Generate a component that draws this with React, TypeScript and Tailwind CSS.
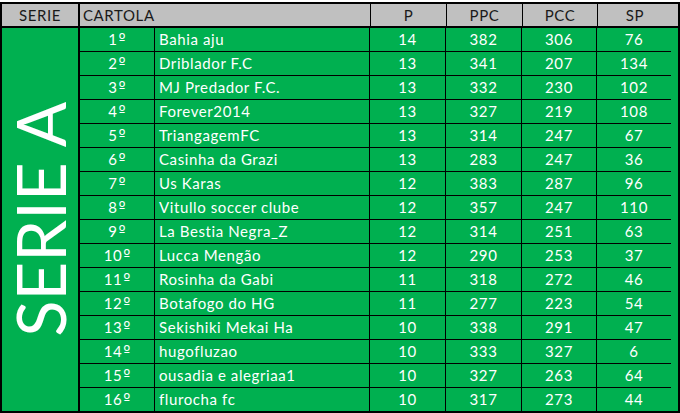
const ROWS = [
  ['1', 'Bahia aju', 14, 382, 306, 76],
  ['2', 'Driblador F.C', 13, 341, 207, 134],
  ['3', 'MJ Predador F.C.', 13, 332, 230, 102],
  ['4', 'Forever2014', 13, 327, 219, 108],
  ['5', 'TriangagemFC', 13, 314, 247, 67],
  ['6', 'Casinha da Grazi', 13, 283, 247, 36],
  ['7', 'Us Karas', 12, 383, 287, 96],
  ['8', 'Vitullo soccer clube', 12, 357, 247, 110],
  ['9', 'La Bestia Negra_Z', 12, 314, 251, 63],
  ['10', 'Lucca Mengão', 12, 290, 253, 37],
  ['11', 'Rosinha da Gabi', 11, 318, 272, 46],
  ['12', 'Botafogo do HG', 11, 277, 223, 54],
  ['13', 'Sekishiki Mekai Ha', 10, 338, 291, 47],
  ['14', 'hugofluzao', 10, 333, 327, 6],
  ['15', 'ousadia e alegriaa1', 10, 327, 263, 64],
  ['16', 'flurocha fc', 10, 317, 273, 44],
] as const

export default function App() {
  return (
    <div className="h-[413px] w-[680px] bg-white font-['Lato',sans-serif] text-[15px] tracking-[0.6px]">
      <div className="mt-[2px] w-[680px] border-2 border-black">
        {/* header */}
        <div className="flex h-[24px] border-b-2 border-black bg-[#c0c0c0] text-[#1a1a1a]">
          <div className="flex w-[78px] items-center justify-center border-r-2 border-black">SERIE</div>
          <div className="flex w-[291px] items-center border-r border-black pl-[3px]">CARTOLA</div>
          <div className="flex w-[76px] items-center justify-center border-r border-black">P</div>
          <div className="flex w-[76px] items-center justify-center border-r border-black">PPC</div>
          <div className="flex w-[75px] items-center justify-center border-r border-black">PCC</div>
          <div className="flex w-[74px] items-center justify-center">SP</div>
        </div>

        <div className="flex bg-[#00b050] text-white">
          <div className="flex w-[78px] items-center justify-center border-r-2 border-black">
            <span className="rotate-180 text-[67px] leading-none tracking-normal [writing-mode:vertical-rl]">SERIE A</span>
          </div>
          <div className="flex flex-col">
            {ROWS.map((r, i) => (
              <div
                key={r[0]}
                className={
                  i === ROWS.length - 1
                    ? 'flex h-[23px]'
                    : 'flex h-[24px] border-b border-black'
                }
              >
                <div className="flex w-[75px] items-center justify-center border-r border-black">
                  {r[0]}
                  <span className="pl-[1px] font-['DejaVu_Sans',sans-serif] text-[15px] tracking-normal">º</span>
                </div>
                <div className="flex w-[215px] items-center border-r border-black pl-[4px]">{r[1]}</div>
                <div className="flex w-[76px] items-center justify-center border-r border-black">{r[2]}</div>
                <div className="flex w-[76px] items-center justify-center border-r border-black">{r[3]}</div>
                <div className="flex w-[75px] items-center justify-center border-r border-black">{r[4]}</div>
                <div className="flex w-[74px] items-center justify-center">{r[5]}</div>
              </div>
            ))}
          </div>
        </div>
      </div>
    </div>
  )
}
